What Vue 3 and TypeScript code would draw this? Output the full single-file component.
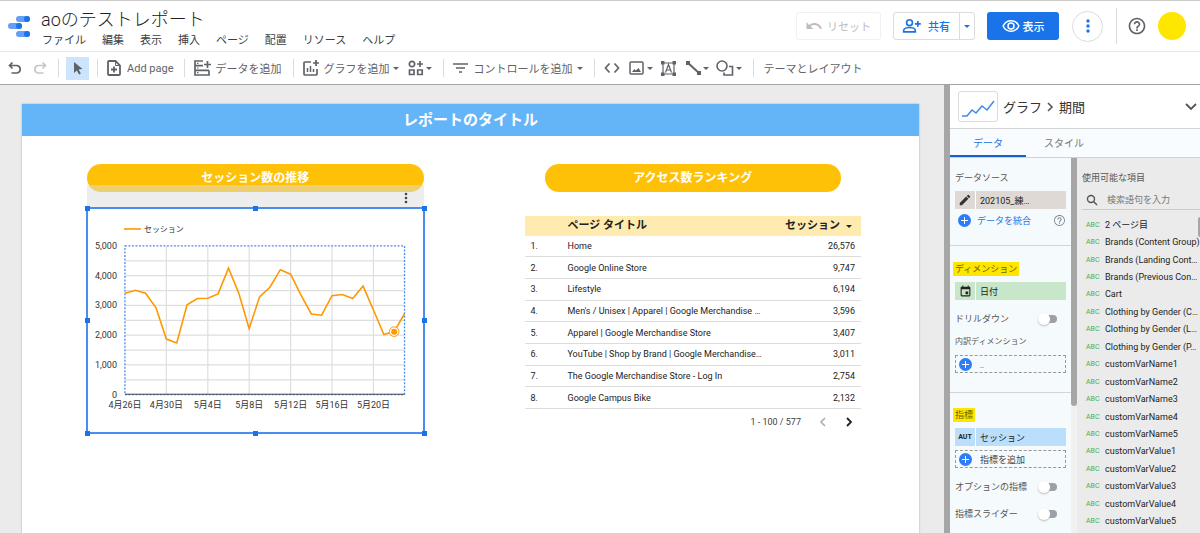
<script setup lang="ts">
interface Row {
  title: string
  sessions: string
}

const menus: string[] = ['ファイル', '編集', '表示', '挿入', 'ページ', '配置', 'リソース', 'ヘルプ']

const rows: Row[] = [
  { title: 'Home', sessions: '26,576' },
  { title: 'Google Online Store', sessions: '9,747' },
  { title: 'Lifestyle', sessions: '6,194' },
  { title: "Men's / Unisex | Apparel | Google Merchandise …", sessions: '3,596' },
  { title: 'Apparel | Google Merchandise Store', sessions: '3,407' },
  { title: 'YouTube | Shop by Brand | Google Merchandise…', sessions: '3,011' },
  { title: 'The Google Merchandise Store - Log In', sessions: '2,754' },
  { title: 'Google Campus Bike', sessions: '2,132' },
]

const fields: string[] = [
  '2 ページ目',
  'Brands (Content Group)',
  'Brands (Landing Cont…',
  'Brands (Previous Con…',
  'Cart',
  'Clothing by Gender (C…',
  'Clothing by Gender (L…',
  'Clothing by Gender (P…',
  'customVarName1',
  'customVarName2',
  'customVarName3',
  'customVarName4',
  'customVarName5',
  'customVarValue1',
  'customVarValue2',
  'customVarValue3',
  'customVarValue4',
  'customVarValue5',
]

const sessions: number[] = [
  3410, 3510, 3410, 2920, 1870, 1740, 3020, 3230, 3240, 3390, 4250, 3400, 2220, 3290, 3610, 4200,
  4050, 3350, 2715, 2670, 3330, 3370, 3230, 3650, 2850, 2025, 2120, 2720,
]

const plot = { left: 38, right: 318, top: 38, bottom: 187 }
const xAt = (i: number): number => plot.left + ((plot.right - plot.left) * i) / (sessions.length - 1)
const yAt = (v: number): number => plot.bottom - ((plot.bottom - plot.top) * v) / 5000
const line = sessions.map((v, i) => `${xAt(i).toFixed(1)},${yAt(v).toFixed(1)}`).join(' ')
const yTicks = [0, 1000, 2000, 3000, 4000, 5000]
const yLines = [500, 1000, 1500, 2000, 2500, 3000, 3500, 4000, 4500]
const xTicks = ['4月26日', '4月30日', '5月4日', '5月8日', '5月12日', '5月16日', '5月20日']
const handles = ['nw', 'n', 'ne', 'w', 'e', 'sw', 's', 'se']
</script>

<template>
  <div class="app">
    <header class="header">
      <svg class="logo" viewBox="0 0 24 24" aria-hidden="true">
        <g fill="#669df6">
          <rect x="9" y="2" width="14" height="6" rx="3" />
          <rect x="1" y="9" width="14" height="6" rx="3" />
          <rect x="9" y="17" width="14" height="6" rx="3" />
        </g>
        <g fill="#1a73e8">
          <circle cx="20" cy="5" r="3" />
          <circle cx="12" cy="12" r="3" />
          <circle cx="20" cy="20" r="3" />
        </g>
      </svg>
      <div class="heading">
        <h1>aoのテストレポート</h1>
        <nav>
          <button v-for="m in menus" :key="m" type="button">{{ m }}</button>
        </nav>
      </div>
      <div class="actions">
        <button type="button" class="reset" disabled>
          <svg width="18" height="18" viewBox="0 0 24 24" fill="currentColor"><path d="M12.500 8c-2.650 0-5.050.99-6.900 2.600L2 7v9h9l-3.620-3.620c1.390-1.160 3.160-1.880 5.120-1.880 3.540 0 6.550 2.310 7.600 5.500l2.370-.78C21.080 11.030 17.150 8 12.500 8z" /></svg>
          リセット
        </button>
        <div class="share">
          <button type="button" class="share-main">
            <svg width="20" height="20" viewBox="0 0 24 24" fill="none" stroke="currentColor" stroke-width="2"><circle cx="9" cy="8" r="3.500" /><path d="M2 19v-1.500c0-2.500 4-3.700 7-3.700s7 1.200 7 3.700V19zM19 6v7M15.500 9.500h7" /></svg>
            共有
          </button>
          <button type="button" class="share-more" aria-label="共有オプション"><i class="caret"></i></button>
        </div>
        <button type="button" class="view">
          <svg width="18" height="18" viewBox="0 0 24 24" fill="none" stroke="currentColor" stroke-width="2"><path d="M1.500 12C3.400 7.800 7.400 5 12 5s8.600 2.800 10.500 7c-1.900 4.200-5.900 7-10.500 7s-8.600-2.800-10.500-7z" /><circle cx="12" cy="12" r="4" /></svg>
          表示
        </button>
        <button type="button" class="more" aria-label="その他">
          <svg width="16" height="16" viewBox="0 0 16 16" fill="currentColor"><circle cx="8" cy="3" r="1.700" /><circle cx="8" cy="8" r="1.700" /><circle cx="8" cy="13" r="1.700" /></svg>
        </button>
        <span class="rule"></span>
        <button type="button" class="help" aria-label="ヘルプ">
          <svg width="20" height="20" viewBox="0 0 24 24" fill="#5f6368"><path d="M11 18h2v-2h-2v2zm1-16C6.480 2 2 6.480 2 12s4.480 10 10 10 10-4.480 10-10S17.520 2 12 2zm0 18c-4.410 0-8-3.590-8-8s3.590-8 8-8 8 3.590 8 8-3.590 8-8 8zm0-14c-2.210 0-4 1.790-4 4h2c0-1.100.9-2 2-2s2 .9 2 2c0 2-3 1.750-3 5h2c0-2.250 3-2.500 3-5 0-2.210-1.790-4-4-4z" /></svg>
        </button>
        <button type="button" class="avatar" aria-label="アカウント"></button>
      </div>
    </header>

    <div class="toolbar">
      <button type="button" class="tool" aria-label="元に戻す">
        <svg width="14" height="14" viewBox="0 0 14 14" fill="none" stroke="#5f6368" stroke-width="1.700"><path d="M4.500 1.500L1.500 4.500l3 3M2 4.500h7a3.800 3.800 0 010 7.500H3.500" /></svg>
      </button>
      <button type="button" class="tool redo" aria-label="やり直す">
        <svg width="14" height="14" viewBox="0 0 14 14" fill="none" stroke="#c4c6c8" stroke-width="1.700"><path d="M9.500 1.500l3 3-3 3M12 4.500H5a3.800 3.800 0 000 7.500h5.500" /></svg>
      </button>
      <span class="sep"></span>
      <button type="button" class="tool pointer" aria-label="選択">
        <svg width="12" height="14" viewBox="0 0 12 14" fill="#5f6368"><path d="M2 1l8.500 7-3.900.5 2.300 4-1.800 1-2.300-4L2 12z" /></svg>
      </button>
      <span class="sep"></span>
      <button type="button" class="tool page-add">
        <svg width="14" height="16" viewBox="0 0 14 16" fill="none" stroke="#5f6368" stroke-width="1.800"><path d="M1 2a1 1 0 011-1h6.500L13 5.500V14a1 1 0 01-1 1H2a1 1 0 01-1-1zM7 6.500v6M4 9.500h6" /><path d="M8.500 1v4.500H13" stroke-width="1" /></svg>
        Add page
      </button>
      <span class="sep"></span>
      <button type="button" class="tool data">
        <svg width="17" height="16" viewBox="0 0 17 16" fill="none" stroke="#5f6368" stroke-width="1.700"><path d="M9 1H1v14h14v-4.500M1 5.700h8M1 10.300h14M13.500 1v7M10 4.500h7" /><path d="M3 3.400h1.500M3 8h1.500M3 12.700h1.500" stroke-width="1.200" /></svg>
        データを追加
      </button>
      <span class="sep"></span>
      <button type="button" class="tool">
        <svg width="16" height="16" viewBox="0 0 16 16" fill="none" stroke="#5f6368" stroke-width="1.700"><path d="M8 2H2a1 1 0 00-1 1v11a1 1 0 001 1h11a1 1 0 001-1V9M13 0v6M10 3h6" /><path d="M4.500 12V8M7.500 12V6M10.500 12V9" stroke-width="1.500" /></svg>
        グラフを追加<i class="caret"></i>
      </button>
      <button type="button" class="tool community" aria-label="コミュニティ ビジュアライゼーション">
        <svg width="16" height="16" viewBox="0 0 16 16" fill="none" stroke="#5f6368" stroke-width="1.700"><circle cx="4" cy="4" r="2.700" /><path d="M12 1v6M9 4h6M1.500 10h4.500v4.500H1.500zM9.700 10h4.500v4.500H9.700z" /></svg>
        <i class="caret"></i>
      </button>
      <span class="sep"></span>
      <button type="button" class="tool control">
        <svg width="15" height="12" viewBox="0 0 15 12" fill="none" stroke="#5f6368" stroke-width="1.700"><path d="M0 2h15M3 6h9M6 10h3" /></svg>
        コントロールを追加<i class="caret"></i>
      </button>
      <span class="sep"></span>
      <button type="button" class="tool" aria-label="URL の埋め込み">
        <svg width="16" height="12" viewBox="0 0 16 12" fill="none" stroke="#5f6368" stroke-width="1.700"><path d="M5.500 1.500L1.500 6l4 4.500M10.500 1.500l4 4.500-4 4.500" /></svg>
      </button>
      <button type="button" class="tool image" aria-label="画像">
        <svg width="15" height="14" viewBox="0 0 15 14" fill="none" stroke="#5f6368" stroke-width="1.500"><rect x="1" y="1" width="13" height="12" rx="1" /><path d="M3 11l2.200-3 1.600 1.500L9.500 7l2.500 4z" fill="#5f6368" stroke="none" /></svg>
        <i class="caret"></i>
      </button>
      <button type="button" class="tool text-tool" aria-label="テキスト">
        <svg width="15" height="15" viewBox="0 0 15 15" fill="none" stroke="#5f6368" stroke-width="1.200"><path d="M2 2h11v11H2zM4.500 11.500l3-8 3 8M5.500 9h4" /><path d="M0 0h3.500v3.500H0zM11.500 0H15v3.500h-3.500zM0 11.500h3.500V15H0zM11.500 11.500H15V15h-3.500z" fill="#5f6368" stroke="none" /></svg>
      </button>
      <button type="button" class="tool line-tool" aria-label="線">
        <svg width="15" height="14" viewBox="0 0 15 14" fill="none" stroke="#5f6368" stroke-width="2"><path d="M2 2l11 10" /><path d="M0 0h4v4H0zM11 10h4v4h-4z" fill="#5f6368" stroke="none" /></svg>
        <i class="caret"></i>
      </button>
      <button type="button" class="tool shape" aria-label="図形">
        <svg width="18" height="16" viewBox="0 0 18 16" fill="none" stroke="#5f6368" stroke-width="1.600"><circle cx="6" cy="6" r="5" /><path d="M13 6.500h3.500V15H8v-2.500" /></svg>
        <i class="caret"></i>
      </button>
      <span class="sep"></span>
      <button type="button" class="tool">テーマとレイアウト</button>
    </div>

    <div class="workspace">
      <main class="stage">
        <article class="page">
          <h2 class="banner">レポートのタイトル</h2>
          <div class="columns">
            <section class="col">
              <div class="title-wrap">
                <h3 class="pill">セッション数の推移</h3>
                <div class="widget-bar">
                  <button type="button" aria-label="グラフのメニュー">
                    <svg width="4" height="12" viewBox="0 0 4 12" fill="#444"><circle cx="2" cy="2" r="1.300" /><circle cx="2" cy="6" r="1.300" /><circle cx="2" cy="10" r="1.300" /></svg>
                  </button>
                </div>
              </div>
              <div class="chart">
                <svg viewBox="0 0 337 225" role="img" aria-label="セッション">
                  <line x1="37" y1="21" x2="54" y2="21" stroke="#ff9800" stroke-width="1.600" />
                  <text x="57" y="24" class="legend">セッション</text>
                  <g stroke="#dedede" stroke-width="1.200">
                    <line v-for="v in yLines" :key="v" :x1="plot.left" :x2="plot.right" :y1="yAt(v)" :y2="yAt(v)" />
                    <line v-for="i in 6" :key="i" :x1="xAt(i * 4)" :x2="xAt(i * 4)" :y1="plot.top" :y2="plot.bottom" />
                  </g>
                  <rect :x="plot.left" :y="plot.top" :width="plot.right - plot.left" :height="plot.bottom - plot.top" fill="none" stroke="#4a8df0" stroke-width="1.300" stroke-dasharray="2 1.500" />
                  <line :x1="plot.left" :x2="plot.right" :y1="plot.bottom - 0.5" :y2="plot.bottom - 0.5" stroke="#444" />
                  <polyline :points="line" fill="none" stroke="#ff9800" stroke-width="1.600" />
                  <circle :cx="xAt(26)" :cy="yAt(2120)" r="4.800" fill="#fff" stroke="#ff9800" />
                  <circle :cx="xAt(26)" :cy="yAt(2120)" r="3" fill="#ff9800" />
                  <text v-for="v in yTicks" :key="v" x="30" :y="yAt(v) + 3" text-anchor="end">{{ v.toLocaleString('en-US') }}</text>
                  <text v-for="(t, i) in xTicks" :key="t" :x="xAt(i * 4)" y="200" text-anchor="middle">{{ t }}</text>
                </svg>
                <i v-for="h in handles" :key="h" class="handle" :class="h"></i>
              </div>
            </section>

            <section class="col">
              <h3 class="pill narrow">アクセス数ランキング</h3>
              <table>
                <thead>
                  <tr>
                    <th class="num"></th>
                    <th>ページ タイトル</th>
                    <th class="value">セッション<i class="caret sort"></i></th>
                  </tr>
                </thead>
                <tbody>
                  <tr v-for="(r, i) in rows" :key="r.title">
                    <td class="num">{{ i + 1 }}.</td>
                    <td>{{ r.title }}</td>
                    <td class="value">{{ r.sessions }}</td>
                  </tr>
                </tbody>
              </table>
              <div class="pager">
                <span>1 - 100 / 577</span>
                <button type="button" aria-label="前へ" disabled>
                  <svg width="8" height="10" viewBox="0 0 8 10" fill="none" stroke="#aaa" stroke-width="1.500"><path d="M6 1L2 5l4 4" /></svg>
                </button>
                <button type="button" aria-label="次へ">
                  <svg width="8" height="10" viewBox="0 0 8 10" fill="none" stroke="#222" stroke-width="1.800"><path d="M2 1l4 4-4 4" /></svg>
                </button>
              </div>
            </section>
          </div>
        </article>
      </main>

      <aside class="panel">
        <div class="panel-head">
          <span class="thumb">
            <svg width="34" height="20" viewBox="0 0 34 20" fill="none" stroke="#4285f4" stroke-width="1.500"><path d="M1 19h5l5-6 4 3 6-7 5 4 7-9" /></svg>
          </span>
          <span>グラフ</span>
          <svg width="7" height="10" viewBox="0 0 7 10" fill="none" stroke="#555" stroke-width="1.600"><path d="M1 1l4 4-4 4" /></svg>
          <span>期間</span>
          <button type="button" class="expand" aria-label="開く">
            <svg width="12" height="8" viewBox="0 0 12 8" fill="none" stroke="#555" stroke-width="1.800"><path d="M1 1l5 5 5-5" /></svg>
          </button>
        </div>
        <div class="tabs" role="tablist">
          <button type="button" role="tab" aria-selected="true" class="active">データ</button>
          <button type="button" role="tab" aria-selected="false">スタイル</button>
        </div>
        <div class="panel-body">
          <div class="setup">
            <section class="source">
              <h4>データソース</h4>
              <button type="button" class="chip tan">
                <span class="chip-icon"><svg width="14" height="14" viewBox="0 0 24 24" fill="#333"><path d="M3 17.250V21h3.750L17.810 9.940l-3.750-3.750L3 17.250zM20.710 7.040a1 1 0 000-1.410l-2.340-2.340a1 1 0 00-1.410 0l-1.830 1.830 3.750 3.750 1.830-1.830z" /></svg></span>
                <span class="chip-text">202105_練…</span>
              </button>
              <div class="blend">
                <button type="button"><span class="plus"></span>データを統合</button>
                <button type="button" aria-label="ヘルプ">
                  <svg width="13" height="13" viewBox="0 0 24 24" fill="#80868b"><path d="M11 18h2v-2h-2v2zm1-16C6.480 2 2 6.480 2 12s4.480 10 10 10 10-4.480 10-10S17.520 2 12 2zm0 18.500a8.500 8.500 0 110-17 8.500 8.500 0 010 17zM12 6c-2.210 0-4 1.790-4 4h2c0-1.100.9-2 2-2s2 .9 2 2c0 2-3 1.750-3 5h2c0-2.250 3-2.500 3-5 0-2.210-1.790-4-4-4z" /></svg>
                </button>
              </div>
            </section>
            <section class="dimension">
              <h4><mark>ディメンション</mark></h4>
              <button type="button" class="chip green">
                <span class="chip-icon"><svg width="13" height="13" viewBox="0 0 24 24" fill="#222"><path d="M17 12h-5v5h5v-5zM16 1v2H8V1H6v2H5a2 2 0 00-2 2v14a2 2 0 002 2h14a2 2 0 002-2V5a2 2 0 00-2-2h-1V1h-2zm3 18H5V8h14v11z" /></svg></span>
                <span class="chip-text">日付</span>
              </button>
              <label class="switch-row"><span>ドリルダウン</span><input type="checkbox" role="switch" /></label>
              <h5>内訳ディメンション</h5>
              <button type="button" class="drop"><span class="plus"></span><span class="faint">_</span></button>
            </section>
            <section class="metric">
              <h4><mark>指標</mark></h4>
              <button type="button" class="chip blue">
                <span class="chip-icon aut">AUT</span>
                <span class="chip-text">セッション</span>
              </button>
              <button type="button" class="drop"><span class="plus"></span><span>指標を追加</span></button>
              <label class="switch-row"><span>オプションの指標</span><input type="checkbox" role="switch" /></label>
              <label class="switch-row"><span>指標スライダー</span><input type="checkbox" role="switch" /></label>
            </section>
          </div>
          <div class="scroll"><i></i></div>
          <div class="fields">
            <h4>使用可能な項目</h4>
            <label class="search">
              <svg width="12" height="12" viewBox="0 0 12 12" fill="none" stroke="#555" stroke-width="1.400"><circle cx="5" cy="5" r="3.500" /><path d="M7.500 7.500L11 11" /></svg>
              <input type="text" placeholder="検索語句を入力" aria-label="検索語句を入力" />
            </label>
            <ul>
              <li v-for="f in fields" :key="f"><b>ABC</b><span>{{ f }}</span></li>
            </ul>
            <i class="list-thumb"></i>
          </div>
        </div>
      </aside>
    </div>
  </div>
</template>

<style>
body {
  margin: 0;
}
</style>

<style scoped>
.app {
  height: 100vh;
  display: flex;
  flex-direction: column;
  overflow: hidden;
  box-sizing: border-box;
  border-top: 1px solid #ccc;
  background: #fff;
  color: #3c4043;
  font-family: Roboto, "Noto Sans CJK JP", sans-serif;
  font-size: 11px;
}
.app * {
  box-sizing: border-box;
}
h1, h2, h3, h4, h5, ul {
  margin: 0;
  padding: 0;
  font-weight: 400;
}
button {
  display: flex;
  align-items: center;
  margin: 0;
  padding: 0;
  border: 0;
  background: none;
  color: inherit;
  font: inherit;
  white-space: nowrap;
}
svg {
  display: block;
  flex: none;
}
.caret {
  flex: none;
  border: 3px solid transparent;
  border-top-color: #5f6368;
  border-bottom: 0;
}

.header {
  display: flex;
  height: 51px;
  flex: none;
  padding: 0 14px 0 7px;
  border-bottom: 1px solid #e4e8ea;
}
.logo {
  width: 24px;
  height: 24px;
  margin-top: 13px;
}
.heading {
  padding: 8px 0 0 10px;
}
h1 {
  font-size: 18px;
  line-height: 22px;
  font-weight: 300;
  color: #222;
}
nav {
  display: flex;
  gap: 16px;
  padding-left: 1px;
}
nav button {
  line-height: 20px;
}
.actions {
  display: flex;
  align-items: center;
  margin-left: auto;
}
.reset, .share, .view {
  height: 28px;
  border-radius: 3px;
}
.reset {
  width: 85px;
  gap: 4px;
  padding-left: 8px;
  border: 1px solid #f1f1f1;
  color: #bdbdbd;
}
.share {
  display: flex;
  width: 82px;
  margin-left: 12px;
  border: 1px solid #dadce0;
  color: #1a73e8;
  font-weight: 500;
}
.share-main {
  flex: 1;
  gap: 6px;
  padding-left: 8px;
}
.share-more {
  width: 15px;
  justify-content: center;
  border-left: 1px solid #dadce0;
}
.share .caret {
  border-top-color: #1a73e8;
}
.view {
  width: 72px;
  justify-content: center;
  gap: 3px;
  margin-left: 12px;
  background: #1a73e8;
  color: #fff;
  font-weight: 500;
}
.more {
  width: 31px;
  height: 31px;
  justify-content: center;
  margin-left: 13px;
  border: 1px solid #dadce0;
  border-radius: 50%;
  color: #1a73e8;
}
.rule {
  width: 1px;
  height: 36px;
  margin-left: 13px;
  background: #dadce0;
}
.help {
  margin-left: 10px;
}
.avatar {
  width: 28px;
  height: 28px;
  margin-left: 11px;
  border-radius: 50%;
  background: #ffe600;
}

.toolbar {
  display: flex;
  align-items: center;
  height: 33px;
  flex: none;
  padding-left: 8px;
  border-bottom: 1px solid #a3a3a3;
  color: #5f6368;
}
.tool {
  gap: 4px;
}
.redo {
  margin-left: 11px;
}
.sep {
  width: 1px;
  height: 18px;
  margin: 0 9px 0 11px;
  background: #dadce0;
}
.redo + .sep {
  margin-right: 7px;
}
.pointer {
  width: 23px;
  height: 23px;
  justify-content: center;
  background: #cce4fd;
}
.pointer + .sep {
  margin-left: 8px;
}
.page-add {
  gap: 6px;
  font-size: 11px;
}
.data {
  padding-right: 1px;
}
.community {
  margin-left: 9px;
  gap: 2px;
}
.control {
  gap: 5px;
}
.image {
  margin-left: 9px;
  gap: 3px;
}
.text-tool {
  margin-left: 8px;
}
.line-tool {
  margin-left: 10px;
  gap: 2px;
}
.shape {
  margin-left: 7px;
  gap: 2px;
}

.workspace {
  display: flex;
  flex: 1;
  min-height: 0;
}
.stage {
  display: flex;
  flex: 1;
  min-width: 0;
  padding: 19px 25px 0 22px;
  background: #ebebeb;
}
.page {
  flex: 1;
  min-width: 0;
  background: #fff;
  box-shadow: 0 0 2px #aaa;
}
.banner {
  background: #64b5f8;
  color: #fff;
  font-size: 15px;
  font-weight: 700;
  line-height: 32px;
  text-align: center;
}
.columns {
  display: flex;
  gap: 101px;
  padding: 28px 58px 0 65px;
}
.col {
  flex: 1;
  min-width: 0;
}
.title-wrap {
  position: relative;
}
.pill {
  border-radius: 14px;
  background: #ffc107;
  color: #fff;
  font-size: 12px;
  font-weight: 700;
  line-height: 28px;
  text-align: center;
}
.pill.narrow {
  margin: 0 20px;
}
.widget-bar {
  display: flex;
  justify-content: flex-end;
  height: 23px;
  margin-top: -7px;
  padding: 7px 16px 0;
  background: rgba(220, 220, 220, 0.5);
  position: relative;
}
.widget-bar button {
  height: 12px;
}
.chart {
  position: relative;
  outline: 2px solid #4a8df0;
  outline-offset: -1px;
}
.chart svg {
  width: 100%;
  height: auto;
}
.chart text {
  font-size: 9px;
  fill: #333;
}
.chart .legend {
  font-size: 8px;
}
.handle {
  position: absolute;
  width: 5px;
  height: 5px;
  margin: -2px;
  background: #1a73e8;
  top: 50%;
  left: 50%;
}
.nw, .n, .ne {
  top: 0;
}
.sw, .s, .se {
  top: 100%;
}
.nw, .w, .sw {
  left: 0;
}
.ne, .e, .se {
  left: 100%;
}
table {
  width: 100%;
  height: 193px;
  margin-top: 24px;
  border-collapse: collapse;
  font-size: 9px;
  color: #222;
}
th {
  height: 20px;
  padding: 0;
  background: #ffebb0;
  font-size: 11px;
  line-height: 18px;
  text-align: left;
}
td {
  padding: 0;
  line-height: 12px;
  border-bottom: 1px solid #dcdcdc;
}
.num {
  width: 43px;
  padding-left: 6px;
}
.value {
  padding-right: 6px;
  text-align: right;
}
th.value {
  padding-right: 9px;
}
.sort {
  display: inline-block;
  margin-left: 6px;
  vertical-align: middle;
  border-top-color: #222;
}
.pager {
  display: flex;
  align-items: center;
  justify-content: flex-end;
  gap: 18px;
  padding: 7px 8px 0 0;
  font-size: 9px;
  line-height: 12px;
}

.panel {
  display: flex;
  flex-direction: column;
  width: 256px;
  flex: none;
  border-left: 6px solid #a6a6a6;
}
.panel-head {
  display: flex;
  align-items: center;
  height: 44px;
  flex: none;
  gap: 5px;
  padding: 0 3px 0 8px;
  border-bottom: 1px solid #d4d4d4;
  font-size: 13px;
  color: #333;
}
.thumb {
  display: flex;
  align-items: flex-end;
  justify-content: center;
  width: 40px;
  height: 31px;
  padding-bottom: 4px;
  border: 1px solid #dadce0;
  border-radius: 3px;
}
.expand {
  margin-left: auto;
}
.tabs {
  display: flex;
  height: 29px;
  flex: none;
  border-bottom: 1px solid #cfd2d4;
  background: #f8fcfe;
  font-size: 10px;
  color: #777;
}
.tabs button {
  width: 76px;
  justify-content: center;
  padding-bottom: 2px;
}
.tabs .active {
  color: #1a73e8;
  border-bottom: 2px solid #1a5fd0;
  padding-bottom: 0;
}
.panel-body {
  display: flex;
  flex: 1;
  min-height: 0;
  font-size: 9px;
}
.setup {
  flex: 1;
  min-width: 0;
  overflow: hidden;
  background: #f5fafd;
}
.setup section {
  padding: 0 5px;
}
h4, h5 {
  line-height: 14px;
  font-size: 9px;
  color: #555;
}
h5 {
  font-size: 8px;
}
.setup .source {
  height: 88px;
  padding-top: 13px;
  border-bottom: 1px solid #d4d4d4;
}
.source h4 {
  margin-bottom: 6px;
}
.chip, .drop {
  width: 100%;
  height: 18px;
  color: #222;
}
.chip-icon {
  display: flex;
  align-items: center;
  justify-content: center;
  width: 21px;
  height: 100%;
  border-right: 1px solid #fff;
}
.chip-text {
  padding-left: 4px;
}
.aut {
  font-size: 7px;
  font-weight: 700;
}
.tan {
  background: #ded9d4;
}
.green {
  background: #c8e6c9;
}
.blue {
  background: #bbdefb;
}
.blend {
  display: flex;
  justify-content: space-between;
  height: 22px;
  color: #1a73e8;
}
.blend button {
  gap: 6px;
}
.blend .plus {
  margin-left: 3px;
}
.plus {
  flex: none;
  width: 13px;
  height: 13px;
  border-radius: 50%;
  background:
    linear-gradient(#fff, #fff) center / 7px 1px no-repeat,
    linear-gradient(#fff, #fff) center / 1px 7px no-repeat,
    #2f7df6;
}
.setup .dimension {
  height: 147px;
  padding-top: 16px;
  border-bottom: 1px solid #d4d4d4;
}
.dimension h4, .metric h4 {
  margin: 0 0 6px -2px;
}
mark {
  display: inline-block;
  padding: 0 2px;
  background: #ffe600;
  color: #6b6000;
}
.switch-row {
  display: flex;
  align-items: center;
  justify-content: space-between;
  height: 27px;
  padding-right: 9px;
  color: #555;
}
.dimension .switch-row {
  margin: 5px 0 3px;
}
.switch-row input {
  appearance: none;
  position: relative;
  width: 16px;
  height: 8px;
  margin: 0;
  border-radius: 4px;
  background: #9aa0a6;
}
.switch-row input::before {
  content: "";
  position: absolute;
  left: -3px;
  top: -2px;
  width: 12px;
  height: 12px;
  border-radius: 50%;
  background: #fff;
  box-shadow: 0 1px 2px #bbb;
}
.dimension h5 {
  margin-bottom: 6px;
}
.drop {
  gap: 8px;
  padding-left: 3px;
  border: 1px dashed #999;
  color: #444;
}
.faint {
  color: #aaa;
}
.setup .metric {
  padding-top: 15px;
}
.metric .drop {
  margin: 4px 0 5px;
}
.scroll {
  width: 6px;
  flex: none;
  background: #f1f1f1;
}
.scroll i {
  display: block;
  height: 248px;
  border-radius: 0 0 3px 3px;
  background: #a6a6a6;
}
.fields {
  position: relative;
  width: 123px;
  flex: none;
  overflow: hidden;
  padding: 13px 0 0 5px;
  background: #ebebeb;
}
.search {
  display: flex;
  align-items: center;
  gap: 9px;
  height: 25px;
  padding: 5px 0 0 4px;
  border-bottom: 1px solid #ccc;
}
.search input {
  width: 100%;
  min-width: 0;
  padding: 0;
  border: 0;
  outline: 0;
  background: none;
  font: inherit;
}
.search input::placeholder {
  color: #777;
}
ul {
  display: grid;
  grid-auto-rows: 1fr;
  height: 314px;
  margin-top: 6px;
  list-style: none;
  color: #222;
}
li {
  display: flex;
  align-items: center;
  min-height: 0;
  line-height: 14px;
  white-space: nowrap;
}
li b {
  width: 16px;
  margin: 0 3px 0 4px;
  font-size: 7px;
  font-weight: 400;
  color: #4caf50;
}
.list-thumb {
  position: absolute;
  right: 0;
  top: 59px;
  width: 2px;
  height: 20px;
  border-radius: 2px 0 0 2px;
  background: #a6a6a6;
}
</style>
